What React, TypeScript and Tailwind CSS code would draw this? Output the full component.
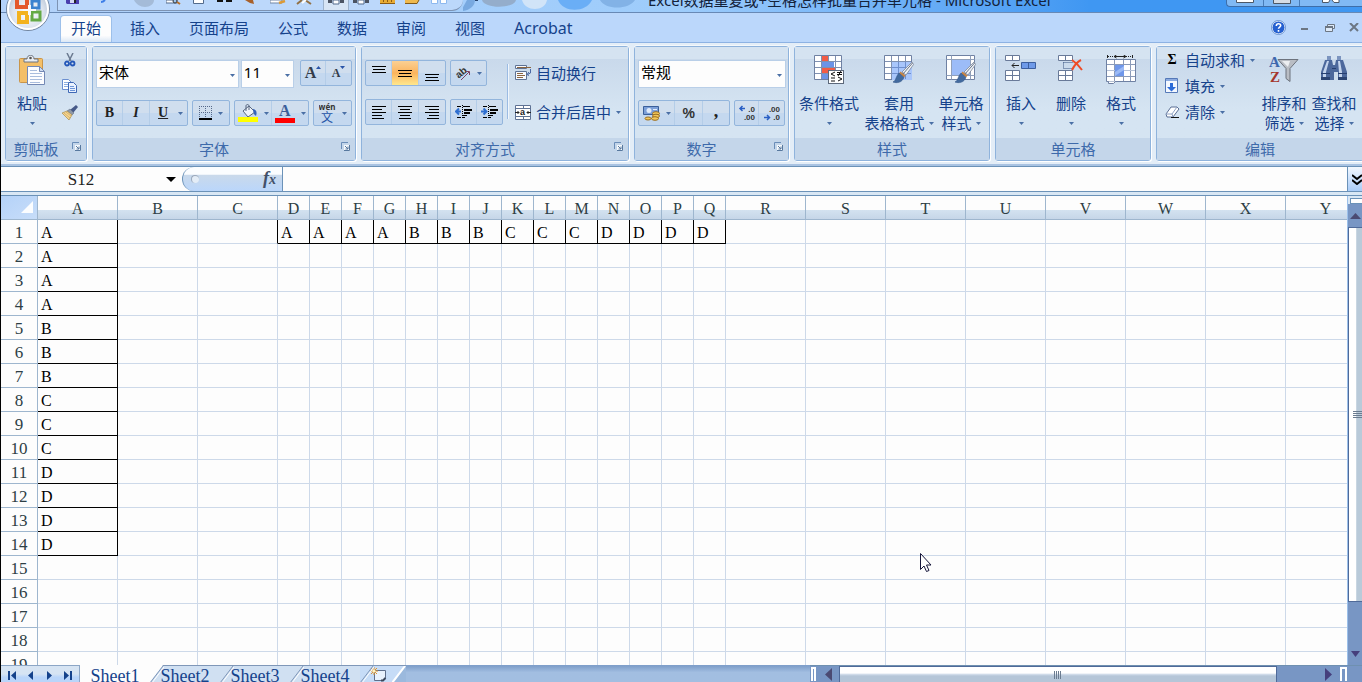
import type { ReactNode } from "react";
import clsx from "clsx";

const ribbonTabs = ["开始", "插入", "页面布局", "公式", "数据", "审阅", "视图", "Acrobat"];

const columns = "ABCDEFGHIJKLMNOPQRSTUVWXY".split("").map((name, i) => ({
  name,
  width: i >= 3 && i <= 16 ? 32 : 80,
}));
const tableWidth = 37 + columns.reduce((sum, c) => sum + c.width, 0);

const values = "AAAABBBCCCDDDD".split("");

const cellValue = (row: number, col: number) => {
  if (col === 0) return values[row] ?? "";
  if (row === 0 && col >= 3) return values[col - 3] ?? "";
  return "";
};

/* ---------- small pieces ---------- */

function Caret() {
  return (
    <svg width="5" height="3" viewBox="0 0 5 3" className="shrink-0" aria-hidden="true">
      <path d="M0 0h5L2.5 3z" fill="#4a6fa5" />
    </svg>
  );
}

function Icon({ w, h, children }: { w: number; h: number; children: ReactNode }) {
  return (
    <svg width={w} height={h} viewBox={`0 0 ${w} ${h}`} className="shrink-0" aria-hidden="true">
      {children}
    </svg>
  );
}

function ButtonBox({ children }: { children: ReactNode }) {
  return (
    <div className="flex h-[26px] divide-x divide-[#b4cde8] overflow-hidden rounded-xs border border-[#93b5dc] bg-linear-to-b from-[#d0deee] from-50% to-[#c4d8ef] to-50%">
      {children}
    </div>
  );
}

function Tool({
  label,
  children,
  width = "w-[26px]",
  active = false,
}: {
  label: string;
  children: ReactNode;
  width?: string;
  active?: boolean;
}) {
  return (
    <button
      aria-label={label}
      className={clsx(
        "flex items-center justify-center gap-1.5",
        width,
        active && "bg-linear-to-b from-[#fbd093] via-[#fbb45c] to-[#fee78d]"
      )}>
      {children}
    </button>
  );
}

function Group({
  title,
  width,
  launcher = false,
  children,
}: {
  title: string;
  width: string;
  launcher?: boolean;
  children: ReactNode;
}) {
  return (
    <section
      className={clsx(
        "flex h-[115px] shrink-0 flex-col rounded-[3px] border border-[#8fb3dc] bg-[#c9d9eb] shadow-[1px_1px_0_#fff,0_-1px_0_#f4f8fc]",
        width
      )}>
      <div className="h-[91px] bg-linear-to-b from-[#d5e3f1] from-[12px] via-[#c9d9eb] via-[12px] to-[#d5e4f2] to-[62px]">
        {children}
      </div>
      <div className="flex h-[22px] items-center bg-[#c4d6ea] text-[#3e6aaa]">
        <h2 className={clsx("flex-1 text-center leading-5", launcher && "pr-1.5")}>{title}</h2>
        {launcher && (
          <button aria-label={`${title}设置`} className="mr-[5px] mb-1.5">
            <Icon w={9} h={9}>
              <path d="M.5 7V.5H7" fill="none" stroke="#6a8db8" />
              <path d="M3 3h6v6H3z" fill="#f5f9fd" />
              <path d="M3 8.500h5.500V3M4 4l3 3M7 4.500V7H4.500" fill="none" stroke="#58799f" />
            </Icon>
          </button>
        )}
      </div>
    </section>
  );
}

function Combo({ label, value, width }: { label: string; value: string; width: string }) {
  return (
    <div className={clsx("relative", width)}>
      <select
        aria-label={label}
        className="h-7 w-full appearance-none border border-[#b9cfe8] bg-[#fdfdfd] pb-1 pl-0.5 text-black">
        <option>{value}</option>
      </select>
      <span className="pointer-events-none absolute top-3.5 right-1">
        <Caret />
      </span>
    </div>
  );
}

function BigButton({
  icon,
  lines,
  width,
}: {
  icon: ReactNode;
  lines: string[];
  width: string;
}) {
  return (
    <button className={clsx("flex flex-col items-center pt-1.5", width)}>
      <span className="flex h-10 items-start pt-0.5">{icon}</span>
      <span className="leading-5 whitespace-nowrap">{lines[0]}</span>
      <span className="flex h-5 items-center gap-1 leading-5 whitespace-nowrap">
        {lines[1]}
        <Caret />
      </span>
    </button>
  );
}

function WideButton({ icon, label, caret = true }: { icon: ReactNode; label: string; caret?: boolean }) {
  return (
    <button className="flex h-[26px] items-center gap-[5px] whitespace-nowrap">
      <span className="flex w-4 justify-center">{icon}</span>
      {label}
      {caret && <Caret />}
    </button>
  );
}

/* ---------- icons ---------- */

const lineRows: Record<string, number[][]> = {
  top: [[0, 0, 14], [1, 3, 12], [0, 6, 14]],
  left: [[0, 0, 14], [0, 3, 10], [0, 6, 14], [0, 9, 10], [0, 12, 12]],
  center: [[0, 0, 14], [2, 3, 10], [0, 6, 14], [2, 9, 10], [1, 12, 12]],
  right: [[0, 0, 14], [4, 3, 10], [0, 6, 14], [4, 9, 10], [2, 12, 12]],
};

function Lines({ kind }: { kind: string }) {
  const rows = lineRows[kind];
  return (
    <svg
      width="14"
      height={rows.length * 3 - 2}
      viewBox={`0 0 14 ${rows.length * 3 - 2}`}
      shapeRendering="crispEdges"
      className="block"
      aria-hidden="true">
      {rows.map(([x, y, w]) => (
        <rect key={y} x={x} y={y} width={w} height="1" fill="#000" />
      ))}
    </svg>
  );
}

function Indent({ back = false }: { back?: boolean }) {
  return (
    <Icon w={17} h={14}>
      <path d={back ? "M6 6.500H1M4 3.500L1 6.500l3 3" : "M0 6.500h5M2.500 3.500l3 3-3 3"} stroke="#2f6fd0" strokeWidth="2" fill="none" />
      <path d="M2 1.500h4M8 1.500h7M2 12.500h4M8 10.500h4M8 12.500h2" stroke="#000" />
      <path d="M7.500 0v14" stroke="#000" strokeDasharray="1 1" />
      <path d="M9 4h8v2H9zM9 7h6v2H9z" fill="#000" />
    </Icon>
  );
}

function Clipboard() {
  return (
    <Icon w={28} h={30}>
      <rect x="1.500" y="3.500" width="23" height="24" rx="1" fill="#f4bf67" stroke="#c9954a" />
      <path d="M6 7V4h3c0-5 7-5 7 0h4v3z" fill="#e9eef4" stroke="#6c7480" />
      <circle cx="12.500" cy="3" r="1.300" fill="#555" />
      <path d="M9.500 11.500h12l5 5v13h-17z" fill="#fcfdff" stroke="#7489b5" />
      <path d="M21.500 11.500v5h5z" fill="#cfdcf0" stroke="#7489b5" />
      <path d="M12 15.500h7M12 18.500h12M12 21.500h12M12 24.500h12M12 27.500h10" stroke="#a9bddd" />
    </Icon>
  );
}

function Scissors() {
  return (
    <Icon w={12} h={14}>
      <path d="M3 0l4 8M9 0L5 8" stroke="#6b7a90" strokeWidth="1.500" />
      <circle cx="3" cy="10.500" r="2" fill="none" stroke="#2457b8" strokeWidth="1.800" />
      <circle cx="8.500" cy="10.500" r="2" fill="none" stroke="#2457b8" strokeWidth="1.800" />
    </Icon>
  );
}

function Copy() {
  return (
    <Icon w={16} h={14}>
      <path d="M.5.5h6l3 3v7h-9z" fill="#fff" stroke="#6b8fd0" />
      <path d="M2 3.500h4M2 5.500h5M2 7.500h5" stroke="#8daee0" />
      <path d="M6.500 3.500h5l3 3v7h-8z" fill="#eaf2fe" stroke="#3f68b5" />
      <path d="M8 7.500h4M8 9.500h5M8 11.500h5" stroke="#6d95d8" />
    </Icon>
  );
}

function FormatBrush() {
  return (
    <Icon w={17} h={15}>
      <path d="M14 0l2 2-5 6-3-3z" fill="#465988" />
      <path d="M8 4l4 4-2 2-5-4z" fill="#8d98a8" stroke="#59657a" strokeWidth=".5" />
      <path d="M5 6l5 4-3 5-7-7z" fill="#f6d690" stroke="#a98b4c" strokeWidth=".7" />
      <path d="M2 8l6 5M4 7l5 4" stroke="#c9a45c" strokeWidth=".7" />
    </Icon>
  );
}

function SheetGrid() {
  return (
    <>
      <path d="M.5.5h27v24H.5z" fill="#fff" stroke="#6f81a3" />
      <path d="M1 6.500h26M1 12.500h26M1 18.500h26M7.500 1v23M14.500 1v23M21.500 1v23" stroke="#7f90b0" />
    </>
  );
}

function Brush() {
  return (
    <>
      <path d="M28 7l1.500 2.500L22 20l-4-3z" fill="#eef1f5" stroke="#7c8798" strokeWidth=".8" />
      <path d="M28.500 8L19 19" stroke="#69758a" />
      <path d="M16.500 16.500l5 4-1.500 2-5-4z" fill="#c78444" />
      <path d="M15 18l5 4.500c-2 5-7 6-11 4.500 3-1 3-6 6-9z" fill="#426a9f" stroke="#34588a" strokeWidth=".6" />
    </>
  );
}

function ConditionalFormat() {
  return (
    <Icon w={31} h={30}>
      <SheetGrid />
      <path d="M8 1h6v5H8zM8 13h13v5H8z" fill="#f25c46" />
      <path d="M8 7h12v5H8zM8 19h6v5H8z" fill="#6c93e6" />
      <rect x="14.500" y="15.500" width="15" height="13" fill="#fff" stroke="#5c687a" />
      <path d="M21 17l-4 2 4 2M17 23h4M17 26h4M23 17.500h5M23 19.500h5M27 16l-3 5M24 22l4 2-4 2" stroke="#111" fill="none" />
    </Icon>
  );
}

function TableFormat() {
  return (
    <Icon w={31} h={29}>
      <SheetGrid />
      <path d="M8 7h20v18H8z" fill="#a9c6fb" />
      <path d="M8 12.500h19M8 18.500h19M14.500 7v17M21.500 7v17" stroke="#6f8fce" />
      <Brush />
    </Icon>
  );
}

function CellStyle() {
  return (
    <Icon w={31} h={29}>
      <path d="M.5.5h28v24H.5z" fill="#fff" stroke="#6f81a3" />
      <path d="M.5 4.500h28M.5 20.500h28M5.500.5v24M24.500.5v24" stroke="#90a0bb" />
      <path d="M6 5h18v15H6z" fill="#9cbcf8" />
      <Brush />
    </Icon>
  );
}

function InsertCells() {
  return (
    <Icon w={32} h={28}>
      <path d="M.5.5h14v5H.5zM7.500.5v5M.5 15.500h14v10H.5zM.5 20.500h14M7.500 15.500v10" fill="#fff" stroke="#697a99" />
      <path d="M16.500 7.500h14v6h-14zM23.500 7.500v6" fill="#6f9ae8" stroke="#3d5f9e" />
      <path d="M14 10.500H7M9.500 8L7 10.500 9.500 13" fill="none" stroke="#222" />
    </Icon>
  );
}

function DeleteCells() {
  return (
    <Icon w={26} h={28}>
      <path d="M.5.5h14v5H.5zM7.500.5v5M.5 15.500h14v10H.5zM.5 20.500h14M7.500 15.500v10" fill="#fff" stroke="#697a99" />
      <path d="M5.500 7.500h10M5.500 13.500h10M5.500 7.500v6" stroke="#36507f" strokeDasharray="1 1" />
      <path d="M14 5c3 2 7 6 10 10M23 5c-4 2-7 6-9 10" stroke="#ee4b26" strokeWidth="2" fill="none" />
    </Icon>
  );
}

function FormatCells() {
  return (
    <Icon w={31} h={30}>
      <path d="M1.500 0v3M26.500 0v3M10.500 0L8 1.500l2.500 1.500M17.500 0L20 1.500 17.500 3" fill="none" stroke="#222" />
      <path d="M2 1.500h6M20 1.500h6" stroke="#222" strokeDasharray="1 1" />
      <path d="M8 1.500h12" stroke="#222" />
      <path d="M.5 4.500h29v22H.5z" fill="#fff" stroke="#6f81a3" />
      <path d="M1 9.500h28M1 21.500h28M8.500 5v21M17.500 5v21M24.500 5v21" stroke="#8a9ab8" />
      <path d="M1 15.500h28" stroke="#b7c3d8" />
      <path d="M9 10h9v11H9z" fill="#6f97ea" />
      <path d="M9 21v-4l9-6v4z" fill="#9bbaf5" />
      <path d="M2.500 26.500v2h5l2-2h5" fill="#fff" stroke="#6f81a3" />
    </Icon>
  );
}

function SortFilter() {
  return (
    <Icon w={31} h={30}>
      <text x="0" y="12" fontSize="15" fontWeight="bold" fontFamily="Liberation Serif, serif" fill="#3e68ad">A</text>
      <text x="1" y="27" fontSize="15" fontWeight="bold" fontFamily="Liberation Serif, serif" fill="#a5362c">Z</text>
      <path d="M9 4.500h20l-8 9v13l-4-3v-10z" fill="#b9bdc4" stroke="#6d737d" />
      <path d="M13 6h8l-2 6z" fill="#eceef1" />
    </Icon>
  );
}

function Binoculars() {
  return (
    <Icon w={28} h={27}>
      <path d="M7 1h4v4H7zM17 1h4v4h-4z" fill="#7b94bf" />
      <path d="M5 5h7l1 5h2l1-5h7l4 12v8h-9v-8h-4v8H1v-8z" fill="#4c689c" />
      <path d="M7 6h2L6 17v6H3v-6zM18 6h2l2 11v6h-3v-6z" fill="#c3d3ec" />
      <path d="M1 18.500h9M18 18.500h9M12 13.500h4" stroke="#263f70" />
      <path d="M1 22h9v3H1zM18 22h9v3h-9z" fill="#2b4473" />
    </Icon>
  );
}

function Decimal({ first, second, left }: { first: string; second: string; left?: boolean }) {
  return (
    <Icon w={18} h={16}>
      <g fontFamily="Liberation Sans, sans-serif" fontSize="8" fontWeight="bold" fill="#333" textAnchor="end">
        <text x="17" y="7">{first}</text>
        <text x="17" y="15">{second}</text>
      </g>
      <path
        d={left ? "M7 3.500H2M4.500 1L2 3.500 4.500 6" : "M1 12.500h5M4 10l2.500 2.500L4 15"}
        stroke="#2a5fc4"
        strokeWidth="1.500"
        fill="none"
      />
    </Icon>
  );
}

/* ---------- window parts ---------- */

function TitleBar() {
  return (
    <header className="relative flex h-[13px] shrink-0 overflow-hidden border-b border-[#6889b5] bg-linear-to-r from-[#b3d2fa] via-[#9dccfb] via-50% to-[#3f97f2] to-80%">
      <div className="ml-14 flex h-[11px] w-[406px] shrink-0 items-start rounded-br-xl border-b border-l border-[#7d93b3] bg-[#bcd8fb] pl-2">
        <button aria-label="保存" className="w-8">
          <Icon w={13} h={5}><path d="M0 0h13v4H1L0 3z" fill="#4b3fae" /><path d="M4 0h6v3H4z" fill="#d6d9f4" /><path d="M8 0h2v3H8z" fill="#222" /></Icon>
        </button>
        <button aria-label="撤消" className="w-9">
          <Icon w={8} h={4}><path d="M3 2c2 0 3-1 4-2" stroke="#3d7ee8" strokeWidth="2" fill="none" /></Icon>
        </button>
        <button aria-label="恢复" className="w-[32px]">
          <Icon w={20} h={7}><path d="M0 0h20c0 4-4 7-9 7S2 4 0 0z" fill="#a4bbd8" /></Icon>
        </button>
        <button aria-label="打印预览" className="w-[27px]">
          <Icon w={15} h={5}><path d="M0 0h11v3H0z" fill="#fff" stroke="#536b8c" /><circle cx="9" cy="1" r="2" fill="#9dc4ec" stroke="#333" /><path d="M11 2l3 2" stroke="#b7702a" strokeWidth="2" /></Icon>
        </button>
        <button aria-label="新建" className="w-6">
          <Icon w={11} h={5}><path d="M.5 0v3.500h10V0" fill="#fff" stroke="#536b8c" /></Icon>
        </button>
        <button aria-label="查找" className="w-7">
          <Icon w={15} h={3}><path d="M0 0h6v2H0zM9 0h6v2H9z" fill="#111" /></Icon>
        </button>
        <button aria-label="格式刷" className="w-[25px]">
          <Icon w={9} h={5}><path d="M0 0h8l1 4-4-1z" fill="#a8602a" /></Icon>
        </button>
        <button aria-label="编辑" className="w-[26px]">
          <Icon w={16} h={5}><path d="M0 0h12v3H0z" fill="#fff" stroke="#7186a5" /><path d="M9 3l6-2" stroke="#dc9b38" strokeWidth="2.500" /></Icon>
        </button>
        <button aria-label="工具" className="w-[27px]">
          <Icon w={16} h={5}><path d="M1 4l5-4M9 0l6 4" stroke="#927145" strokeWidth="2" /><path d="M6 3l4-3" stroke="#fff" strokeWidth="2" /></Icon>
        </button>
        <button aria-label="录制宏" className="flex h-2.5 w-[26px] justify-center border-x border-[#9db3cd] bg-[#d7e5f5]">
          <Icon w={16} h={5}><path d="M0 0h4v3H0zM12 0h4v3h-4z" fill="#4b5464" /><path d="M5 0h6v4H5z" fill="#fff" stroke="#536b8c" /></Icon>
        </button>
        <button aria-label="停止录制" className="ml-1 w-[27px]">
          <Icon w={16} h={5}><path d="M0 0h4v3H0zM12 0h4v3h-4z" fill="#4b5464" /><path d="M5 0h6v4H5z" fill="#fff" stroke="#536b8c" /></Icon>
        </button>
        <button aria-label="标尺" className="w-[25px]">
          <Icon w={16} h={4}><path d="M0 0h15v4H0z" fill="#e8ac35" /><path d="M0 3.500h15M3.500 0v2M7.500 0v2M11.500 0v2" stroke="#8c5c14" /></Icon>
        </button>
        <button aria-label="打开" className="w-[26px]">
          <Icon w={15} h={4}><path d="M0 0h14l-2 4H0z" fill="#efb94d" /><path d="M0 3.500h12l2-3.500" stroke="#805a1b" fill="none" /></Icon>
        </button>
        <button aria-label="窗口">
          <Icon w={16} h={4}><path d="M.5 0v3.500h6V0M9.500 0v3.500h6V0" fill="#fff" stroke="#8db8ee" /></Icon>
        </button>
      </div>
      <svg viewBox="0 0 185 12" className="h-3 w-[185px] shrink-0" aria-hidden="true">
        <path d="M4 0h8c0 6-6 11-14 11z" fill="#78a9e0" />
        <path d="M12 0h3v1h-3z" fill="#27456f" />
        <path d="M19 0h34c-2 9-32 9-34 0z" fill="#94adcb" />
        <path d="M59 0h25c-2 12-22 12-25 0z" fill="#d1e4f8" />
        <path d="M95 0h34c-6 13-29 13-34 0z" fill="#6aaef6" />
        <path d="M137 0h35c-6 10-30 10-35 0z" fill="#82b2e6" />
      </svg>
      <h1 className="-mt-2.5 leading-5 whitespace-nowrap text-[#14223a]">
        Excel数据重复或+空格怎样批量合并单元格 - Microsoft Excel
      </h1>
      <div className="ml-auto flex h-[7px] w-[136px] shrink-0 divide-x divide-[#487cb8] rounded-bl-sm border-b border-l border-[#3d6ea9] bg-[#80b9f4]">
        <button aria-label="最小化" className="flex w-[37px] justify-center">
          <Icon w={18} h={3}><path d="M.5 0v2.500h17V0" fill="#fff" stroke="#4d5866" /></Icon>
        </button>
        <button aria-label="还原" className="flex w-[36px] justify-center">
          <Icon w={18} h={4}><path d="M.5 0v3.500h17V0" fill="#d5dce4" stroke="#4d5866" /></Icon>
        </button>
        <button aria-label="关闭" className="flex flex-1 justify-center">
          <Icon w={18} h={3}><path d="M.5 0v2.500h6L8 0M10 0l2 2.500h5V0" fill="#fff" stroke="#4d5866" /></Icon>
        </button>
      </div>
    </header>
  );
}

function OfficeButton() {
  return (
    <button aria-label="Office 按钮" className="absolute -top-7 left-[5px]">
      <svg width="46" height="47" viewBox="0 0 46 47" aria-hidden="true">
        <defs>
          <radialGradient id="orb" cx=".5" cy=".6" r=".55">
            <stop offset="0" stopColor="#fff" />
            <stop offset=".65" stopColor="#dce3ed" />
            <stop offset="1" stopColor="#b9c5d6" />
          </radialGradient>
        </defs>
        <circle cx="22" cy="24" r="21.500" fill="url(#orb)" stroke="#71859f" />
        <circle cx="22" cy="24" r="20" fill="none" stroke="#fff" strokeWidth="2" />
        <path d="M21 22h-10V11h10z" fill="none" stroke="#e4582b" strokeWidth="4" />
        <path d="M26 16h7v7h-7z" fill="none" stroke="#3b82cf" strokeWidth="3" />
        <path d="M13 28h8v9h-8z" fill="none" stroke="#f3b21e" strokeWidth="4" />
        <path d="M26 27h8v8h-8z" fill="none" stroke="#63a944" strokeWidth="3" />
        <path d="M22 20h3v10h-3zM17 24h13v2H17z" fill="#f7f8fa" />
      </svg>
    </button>
  );
}

function TabRow() {
  return (
    <nav className="relative flex h-[30px] shrink-0 items-end border-b border-[#8db2e3] bg-[#bbd7fb] pl-[59px] text-[#15428b]">
      <OfficeButton />
      <div className="flex gap-[7px]">
        {ribbonTabs.map((tab, i) => (
          <button
            key={tab}
            className={clsx(
              "h-[27px] rounded-t-sm border border-b-0 px-2.5 pb-0.5 leading-5",
              i === 0
                ? "border-[#9dc0ea] bg-linear-to-b from-[#fdfdfd] from-75% to-[#dce8f5]"
                : "border-transparent",
              tab === "Acrobat" && "text-base"
            )}>
            {tab}
          </button>
        ))}
      </div>
      <div className="ml-auto flex h-full items-center gap-[13px] pr-[3px]">
        <button aria-label="帮助">
          <svg width="15" height="15" viewBox="0 0 15 15">
            <circle cx="7.500" cy="7.500" r="6.500" fill="#2560d0" stroke="#fff" />
            <circle cx="7.500" cy="7.500" r="7" fill="none" stroke="#4e7dc4" strokeWidth=".8" />
            <path d="M5.300 6c0-3 4.400-2.800 4.400-.4 0 1.500-2.200 1.400-2.200 3.200M7.500 10v1.700" fill="none" stroke="#fff" strokeWidth="1.600" />
          </svg>
        </button>
        <button aria-label="最小化窗口" className="pt-1">
          <Icon w={12} h={3}><path d="M2 0h7v2H2z" fill="#6c7683" /></Icon>
        </button>
        <button aria-label="还原窗口">
          <Icon w={12} h={8}><path d="M3.500 4V.5h7v4H8M1.500 2.500h7v5h-7z" fill="#dde9f8" stroke="#6c7683" /><path d="M1 3h8" stroke="#6c7683" strokeWidth="2" /></Icon>
        </button>
        <button aria-label="关闭窗口">
          <Icon w={10} h={9}><path d="M1 0l8 8M9 0L1 8" stroke="#6c7683" strokeWidth="2" /></Icon>
        </button>
      </div>
    </nav>
  );
}

function Ribbon() {
  return (
    <div className="flex h-[123px] shrink-0 gap-[5px] overflow-hidden border-b-2 border-[#a9c3e2] bg-[#e3edf7] pt-[3px] pl-1 text-[#15428b]">
      <Group title="剪贴板" width="w-[82px]" launcher>
        <div className="flex">
          <BigButton icon={<Clipboard />} lines={["粘贴"]} width="w-[52px]" />
          <div className="flex flex-col">
            <button aria-label="剪切" className="flex h-[26px] w-6 items-center justify-center"><Scissors /></button>
            <button aria-label="复制" className="flex h-[26px] w-6 items-center justify-center"><Copy /></button>
            <button aria-label="格式刷" className="flex h-[26px] w-6 items-center justify-center"><FormatBrush /></button>
          </div>
        </div>
      </Group>

      <Group title="字体" width="w-[264px]" launcher>
        <div className="flex flex-col gap-3 px-[3px] pt-[13px]">
          <div className="flex items-start gap-0.5">
            <Combo label="字体" value="宋体" width="w-[145px]" />
            <Combo label="字号" value="11" width="w-[54px]" />
            <div className="pl-1">
              <ButtonBox>
                <Tool label="增大字号" width="w-[25px]">
                  <span className="flex items-start font-[Liberation_Serif] text-base leading-5 font-bold text-[#333c4a]">A<Icon w={5} h={7}><path d="M0 6l2.500-3L5 6z" fill="#2a54a8" /></Icon></span>
                </Tool>
                <Tool label="减小字号" width="w-[25px]">
                  <span className="flex items-start font-[Liberation_Serif] text-xs leading-5 font-bold text-[#333c4a]">A<Icon w={5} h={7}><path d="M0 3h5L2.500 6z" fill="#2a54a8" /></Icon></span>
                </Tool>
              </ButtonBox>
            </div>
          </div>
          <div className="flex gap-1">
            <ButtonBox>
              <Tool label="加粗"><b className="font-[Liberation_Serif] text-sm text-[#222]">B</b></Tool>
              <Tool label="倾斜" width="w-[28px]"><i className="font-[Liberation_Serif] text-sm font-bold text-[#222]">I</i></Tool>
              <Tool label="下划线" width="w-[37px]">
                <u className="pl-1 font-[Liberation_Serif] text-sm font-bold text-[#222]">U</u>
                <span className="pl-1"><Caret /></span>
              </Tool>
            </ButtonBox>
            <ButtonBox>
              <Tool label="边框" width="w-[37px]">
                <Icon w={13} h={14}>
                  <path d="M.5 0v12M6.500 0v12M12.500 0v12M0 .5h13M0 6.500h13" stroke="#55698a" strokeDasharray="1 1" />
                  <path d="M0 13h13" stroke="#000" strokeWidth="2" />
                </Icon>
                <Caret />
              </Tool>
            </ButtonBox>
            <ButtonBox>
              <Tool label="填充颜色" width="w-[37px]">
                <Icon w={20} h={19}>
                  <path d="M5 7l6-5 6 6-7 5z" fill="#eef3fa" stroke="#56657e" />
                  <path d="M8 7V2c0-2 3-2 3 0v4" fill="none" stroke="#56657e" />
                  <path d="M15 5c4 1 4 4 3 7-2-1-3-4-3-7z" fill="#3462bb" />
                  <path d="M0 13h20v5H0z" fill="#ffff00" />
                </Icon>
                <Caret />
              </Tool>
              <Tool label="字体颜色" width="w-[37px]">
                <span className="flex flex-col items-center">
                  <b className="font-[Liberation_Serif] text-base leading-[14px] text-[#3b5f9a]">A</b>
                  <span className="h-[5px] w-5 bg-[#ff0000]" />
                </span>
                <Caret />
              </Tool>
            </ButtonBox>
            <ButtonBox>
              <Tool label="拼音" width="w-[37px]">
                <Icon w={17} h={22}>
                  <text x="8" y="8" fontSize="8" fontWeight="bold" textAnchor="middle" fill="#333">wén</text>
                  <text x="8" y="20" fontSize="12" textAnchor="middle" fill="#2453a6">文</text>
                </Icon>
                <Caret />
              </Tool>
            </ButtonBox>
          </div>
        </div>
      </Group>

      <Group title="对齐方式" width="w-[268px]" launcher>
        <div className="flex px-[3px] pt-[13px]">
          <div className="flex flex-col gap-[13px]">
            <div className="flex gap-1">
              <ButtonBox>
                <Tool label="顶端对齐"><span className="pb-2"><Lines kind="top" /></span></Tool>
                <Tool label="垂直居中" width="w-[27px]" active><Lines kind="top" /></Tool>
                <Tool label="底端对齐"><span className="pt-2"><Lines kind="top" /></span></Tool>
              </ButtonBox>
              <ButtonBox>
                <Tool label="方向" width="w-[35px]">
                  <Icon w={16} h={16}>
                    <text x="1" y="12" fontSize="10" fontWeight="bold" fontFamily="Liberation Sans, sans-serif" fill="#333" transform="rotate(-40 5 9)">ab</text>
                    <path d="M6 15l8-8M11 6.500h3.500V10" fill="none" stroke="#7a4166" />
                  </Icon>
                  <Caret />
                </Tool>
              </ButtonBox>
            </div>
            <div className="flex gap-1">
              <ButtonBox>
                <Tool label="文本左对齐"><Lines kind="left" /></Tool>
                <Tool label="居中" width="w-[27px]"><Lines kind="center" /></Tool>
                <Tool label="文本右对齐"><Lines kind="right" /></Tool>
              </ButtonBox>
              <ButtonBox>
                <Tool label="减少缩进量"><Indent back /></Tool>
                <Tool label="增加缩进量" width="w-[25px]"><Indent /></Tool>
              </ButtonBox>
            </div>
          </div>
          <div className="mt-1 ml-1 h-[55px] w-0.5 border-l border-[#9bbbe3] bg-[#f0f6fc]" />
          <div className="ml-1.5 flex flex-col gap-[13px]">
            <WideButton
              label="自动换行"
              caret={false}
              icon={
                <Icon w={16} h={16}>
                  <path d="M.5.5h11v3H.5zM.5 6.500h11v8H.5z" fill="#f7faff" stroke="#5e7294" />
                  <path d="M2 2.500h14M2 8.500h6M2 10.500h8M2 12.500h6" stroke="#8b6540" />
                  <path d="M15.500 4v4l-3 1.500M14 7l-2 2.500 2 1" fill="none" stroke="#4b68a4" />
                </Icon>
              }
            />
            <WideButton
              label="合并后居中"
              icon={
                <Icon w={16} h={15}>
                  <path d="M.5.5h15v14H.5z" fill="#fff" stroke="#5e7294" />
                  <path d="M0 3.500h16M0 11.500h16M8.500 0v3M8.500 12v3" stroke="#5e7294" />
                  <path d="M0 7.500h4M2.500 6L4 7.500 2.500 9M16 7.500h-4M13.500 6L12 7.500l1.500 1.500" fill="none" stroke="#222" />
                  <text x="5" y="10" fontSize="9" fontWeight="bold" fontFamily="Liberation Sans, sans-serif" fill="#222">a</text>
                </Icon>
              }
            />
          </div>
        </div>
      </Group>

      <Group title="数字" width="w-[155px]" launcher>
        <div className="flex flex-col gap-3 px-[3px] pt-[13px]">
          <Combo label="数字格式" value="常规" width="w-[148px]" />
          <div className="flex gap-1">
            <ButtonBox>
              <Tool label="会计数字格式" width="w-[37px]">
                <Icon w={17} h={16}>
                  <path d="M.5 1.500h15v8H.5z" fill="#7c9fd8" stroke="#3b5f9a" />
                  <circle cx="6" cy="5.500" r="2.500" fill="#dfeafa" />
                  <path d="M10 4.500h4" stroke="#dfeafa" />
                  <ellipse cx="13" cy="8.500" rx="3.500" ry="1.800" fill="#f3c95c" stroke="#9a6c1f" />
                  <ellipse cx="13" cy="11" rx="3.500" ry="1.800" fill="#f3c95c" stroke="#9a6c1f" />
                  <ellipse cx="12" cy="13.500" rx="3.500" ry="1.800" fill="#f3c95c" stroke="#9a6c1f" />
                  <ellipse cx="5" cy="13.500" rx="3" ry="1.500" fill="#f3c95c" stroke="#9a6c1f" />
                </Icon>
                <Caret />
              </Tool>
              <Tool label="百分比" width="w-[28px]"><b className="font-[Liberation_Sans] text-sm text-[#333]">%</b></Tool>
              <Tool label="千位分隔"><b className="pb-1 font-[Liberation_Serif] text-lg leading-5 text-[#222]">,</b></Tool>
            </ButtonBox>
            <ButtonBox>
              <Tool label="增加小数位数" width="w-[25px]"><Decimal first=".0" second=".00" left /></Tool>
              <Tool label="减少小数位数" width="w-[25px]"><Decimal first=".00" second=".0" /></Tool>
            </ButtonBox>
          </div>
        </div>
      </Group>

      <Group title="样式" width="w-[196px]">
        <div className="flex pl-px">
          <BigButton icon={<ConditionalFormat />} lines={["条件格式"]} width="w-[66px]" />
          <BigButton icon={<TableFormat />} lines={["套用", "表格格式"]} width="w-[74px]" />
          <BigButton icon={<CellStyle />} lines={["单元格", "样式"]} width="w-[50px]" />
        </div>
      </Group>

      <Group title="单元格" width="w-[156px]">
        <div className="flex">
          <BigButton icon={<InsertCells />} lines={["插入"]} width="w-[50px]" />
          <BigButton icon={<DeleteCells />} lines={["删除"]} width="w-[50px]" />
          <BigButton icon={<FormatCells />} lines={["格式"]} width="w-[50px]" />
        </div>
      </Group>

      <Group title="编辑" width="w-[208px]">
        <div className="flex pl-[7px]">
          <div className="flex w-[95px] flex-col">
            <WideButton label="自动求和" icon={<b className="font-[Liberation_Serif] text-sm text-black">Σ</b>} />
            <WideButton
              label="填充"
              icon={
                <Icon w={14} h={16}>
                  <path d="M.5.5h12v14H.5z" fill="#f4f8ff" stroke="#5579b8" />
                  <path d="M1 1h11v2H1z" fill="#8cabe0" />
                  <path d="M5 5h3v4h3l-4.500 4.500L2 9h3z" fill="#2c6bd8" />
                </Icon>
              }
            />
            <WideButton
              label="清除"
              icon={
                <Icon w={15} h={13}>
                  <path d="M6 1h6l2 2-6 8H2L1 8z" fill="#fff" stroke="#5b6f94" />
                  <path d="M1 8h6l5-7M7 8l1 3" fill="none" stroke="#8ea2c4" />
                  <path d="M6 11.500h8" stroke="#111" />
                </Icon>
              }
            />
          </div>
          <BigButton icon={<SortFilter />} lines={["排序和", "筛选"]} width="w-[50px]" />
          <BigButton icon={<Binoculars />} lines={["查找和", "选择"]} width="w-[50px]" />
        </div>
      </Group>
    </div>
  );
}

function FormulaBar() {
  return (
    <div className="flex h-[29px] shrink-0 border-b-3 border-[#d9e7f4] bg-[#fdfdfd]">
      <div className="flex w-full border-y border-[#6b92b8]">
        <div className="flex w-[181px] shrink-0 items-center pr-1.5">
          <input
            aria-label="名称框"
            defaultValue="S12"
            className="w-40 bg-transparent pt-0.5 text-center font-[Liberation_Serif] text-[17px] leading-5 text-[#222]"
          />
          <button aria-label="名称列表" className="ml-auto">
            <Icon w={10} h={5}><path d="M0 0h10L5 5z" fill="#000" /></Icon>
          </button>
        </div>
        <div className="flex w-[100px] shrink-0 items-center justify-between rounded-l-full border-l border-[#6b92b8] bg-linear-to-b from-[#fbfdff] from-30% via-[#c9d9eb] via-35% to-[#bad6fb] pr-1.5 pl-2">
          <span className="size-2 rounded-full border-t border-l border-[#9aa8bb] bg-[#e4edf7]" />
          <button aria-label="插入函数" className="font-[Liberation_Serif] text-lg leading-5 font-bold text-[#42506a] italic">
            f<span className="text-sm">x</span>
          </button>
        </div>
        <input aria-label="编辑栏" className="min-w-0 flex-1 border-l border-[#6b92b8] bg-[#fdfdfd]" />
        <button
          aria-label="展开编辑栏"
          className="flex w-[15px] shrink-0 items-center border-l border-[#6b92b8] bg-linear-to-b from-[#f3f8fe] to-[#a9ccf8] pl-1">
          <Icon w={11} h={11}><path d="M0 1l5 4 5-4M0 6l5 4 5-4" fill="none" stroke="#000" strokeWidth="2" /></Icon>
        </button>
      </div>
    </div>
  );
}

function Sheet() {
  return (
    <div className="min-w-0 flex-1 overflow-hidden">
      <table
        className="table-fixed border-separate border-spacing-0 font-[Liberation_Serif]"
        style={{ width: tableWidth }}>
        <colgroup>
          <col className="w-[37px]" />
          {columns.map((c) => (
            <col key={c.name} style={{ width: c.width }} />
          ))}
        </colgroup>
        <thead>
          <tr className="h-6">
            <th className="border-r border-b border-[#9eb6ce] bg-linear-to-br from-[#b4d2f8] to-[#c7ddf9] p-0">
              <button aria-label="全选" className="flex h-[22px] w-full items-center justify-end pr-1">
                <Icon w={13} h={13}><path d="M13 0v12H1z" fill="#fbfdff" /></Icon>
              </button>
            </th>
            {columns.map((c) => (
              <th
                key={c.name}
                className="border-r border-b border-[#9eb6ce] bg-linear-to-b from-[#fdfdfd] from-62% via-[#d3e2f0] via-62% to-[#c6d6e8] p-0 pt-[3px] text-base leading-5 font-normal text-[#2e3f45]">
                {c.name}
              </th>
            ))}
          </tr>
        </thead>
        <tbody>
          {Array.from({ length: 19 }, (_, row) => (
            <tr key={row} className="h-6">
              <th className="border-r border-b border-[#9eb6ce] p-0 pt-[3px] text-[17px] leading-5 font-normal text-[#2e3f45]">
                {row + 1}
              </th>
              {columns.map((c, col) => {
                const value = cellValue(row, col);
                const beforeBox = col === 2 && cellValue(row, 3) !== "";
                return (
                  <td
                    key={c.name}
                    className={clsx(
                      "border-r border-b p-0 pt-[3px] pl-[3px] text-base leading-5 text-black",
                      value ? "border-black" : "border-[#cdd9e9]",
                      beforeBox && "border-r-black"
                    )}>
                    {value}
                  </td>
                );
              })}
            </tr>
          ))}
        </tbody>
      </table>
    </div>
  );
}

function VerticalScroll() {
  return (
    <div className="flex w-[15px] shrink-0 flex-col overflow-hidden border-l border-[#9cc0ea] bg-[#7896c4]">
      <div className="flex h-2 shrink-0 bg-[#d9e7f4] pt-0.5 pl-0.5">
        <div className="flex-1 border border-r-0 border-[#6b92b8] bg-white" />
      </div>
      <button aria-label="向上滚动" className="flex h-[23px] shrink-0 items-center justify-center">
        <Icon w={11} h={6}><path d="M0 6h11L5.500 0z" fill="#4b4a72" /></Icon>
      </button>
      <div className="flex h-[375px] shrink-0 items-center justify-end border border-r-0 border-[#4f6a99] bg-linear-to-r from-white from-50% to-[#b9cad9] to-60%">
        <Icon w={9} h={8}><path d="M0 .5h9M0 2.500h9M0 4.500h9M0 6.500h9" stroke="#6b7c90" /></Icon>
      </div>
      <button aria-label="向下滚动" className="mt-auto mb-2 flex justify-center">
        <Icon w={9} h={6}><path d="M0 0h9L4.500 6z" fill="#463f7c" /></Icon>
      </button>
    </div>
  );
}

const navIcons = [
  ["第一张", "M0 0h2v9H0zM8 0v9L3 4.500z"],
  ["上一张", "M6 0v9L1 4.500z"],
  ["下一张", "M2 0v9l5-4.500z"],
  ["最后一张", "M0 0v9l5-4.500zM6 0h2v9H6z"],
];

function Slash() {
  return (
    <svg width="14" height="17" viewBox="0 0 14 17" className="absolute top-0 left-0" aria-hidden="true">
      <path d="M0 17L13 0" stroke="#7f97b8" />
      <path d="M2 17L14 1" stroke="#fff" />
    </svg>
  );
}

function SheetTabs() {
  return (
    <footer className="flex h-[17px] shrink-0 overflow-hidden bg-[#9bb9dd]">
      <div className="flex w-[79px] shrink-0 items-center justify-between border-t border-r border-[#8ca6c6] bg-linear-to-b from-[#d6e4f3] from-50% to-[#b9d5fa] to-70% px-[7px] pt-0.5">
        {navIcons.map(([label, d]) => (
          <button key={label} aria-label={label}>
            <Icon w={8} h={9}><path d={d} fill="#15428b" /></Icon>
          </button>
        ))}
      </div>
      <div className="flex shrink-0 font-[Liberation_Serif] text-lg leading-5 text-[#15428b]">
        {["Sheet1", "Sheet2", "Sheet3", "Sheet4"].map((name, i) => (
          <button
            key={name}
            className={clsx(
              "relative flex w-[70px] justify-center border-t",
              i === 0 ? "border-[#fdfdfd] bg-[#fdfdfd]" : "border-[#7f97b8] bg-[#d0e0f2]"
            )}>
            {i === 1 && (
              <svg width="14" height="17" viewBox="0 0 14 17" className="absolute -top-px left-0" aria-hidden="true">
                <path d="M0 0h13L0 17z" fill="#fdfdfd" />
              </svg>
            )}
            {i > 0 && <Slash />}
            <span className="relative">{name}</span>
          </button>
        ))}
        <button aria-label="插入工作表" className="relative w-[46px] border-t border-[#7f97b8] bg-[#c6dcf7] pl-2.5">
          <Slash />
          <Icon w={17} h={15}>
            <path d="M4.500 3.500h11v8l-2 2h-9z" fill="#e9f2fd" stroke="#5f6f8c" />
            <path d="M11 13.500h2l2.500-2.500" stroke="#3d485c" strokeWidth="2" fill="none" />
            <path d="M4 0v8M0 4h8M1 1l6 6M7 1L1 7" stroke="#e0932a" />
            <circle cx="4" cy="4" r="1.500" fill="#fff3c0" />
          </Icon>
          <svg width="14" height="17" viewBox="0 0 14 17" className="absolute top-0 right-0" aria-hidden="true">
            <path d="M14 0v17H1z" fill="#9bb9dd" />
            <path d="M0 17L13 0" stroke="#fff" strokeWidth="2" />
          </svg>
        </button>
      </div>
      <div className="flex-1 border-t border-[#7f9fca] bg-linear-to-b from-[#7f9fca] to-[#a2bee1] to-40%" />
      <div className="flex w-[552px] shrink-0 border-t border-[#6f90b0] bg-[#7896c4]">
        <div className="m-px w-[5px] border-2 border-b-0 border-white bg-[#7896c4]" />
        <button aria-label="向左滚动" className="flex w-[22px] items-center justify-center">
          <Icon w={7} h={13}><path d="M7 0v13L0 6.500z" fill="#4b4a72" /></Icon>
        </button>
        <div className="flex flex-1 items-center justify-center border border-b-0 border-[#4f6a99] bg-linear-to-b from-white from-40% via-[#cfdbe9] via-50% to-[#b5c6d8] to-60%">
          <Icon w={8} h={8}><path d="M.5 0v8M2.500 0v8M4.500 0v8M6.500 0v8" stroke="#6b7c90" /></Icon>
        </div>
        <button aria-label="向右滚动" className="ml-12 flex w-[14px] items-center">
          <Icon w={7} h={13}><path d="M0 0v13l7-6.500z" fill="#463f7c" /></Icon>
        </button>
        <div className="m-px mr-[15px] w-[7px] border-2 border-b-0 border-white bg-[#7896c4]" />
      </div>
    </footer>
  );
}

export default function App() {
  return (
    <main className="relative flex h-screen flex-col overflow-hidden border-l border-black bg-[#fdfdfd] font-['Noto_Sans','Noto_Sans_CJK_SC',sans-serif] text-[15px]">
      <TitleBar />
      <TabRow />
      <Ribbon />
      <FormulaBar />
      <div className="flex min-h-0 flex-1 border-t border-[#6b92b8]">
        <Sheet />
        <VerticalScroll />
      </div>
      <SheetTabs />
      {/* mouse pointer */}
      <svg width="12" height="20" viewBox="0 0 12 20" className="absolute top-[553px] left-[919px]" aria-hidden="true">
        <path d="M.5.5v16l3.500-3.500 2.500 5.500 2.500-1-2.500-5.500H11z" fill="#fff" stroke="#16163a" />
      </svg>
    </main>
  );
}
